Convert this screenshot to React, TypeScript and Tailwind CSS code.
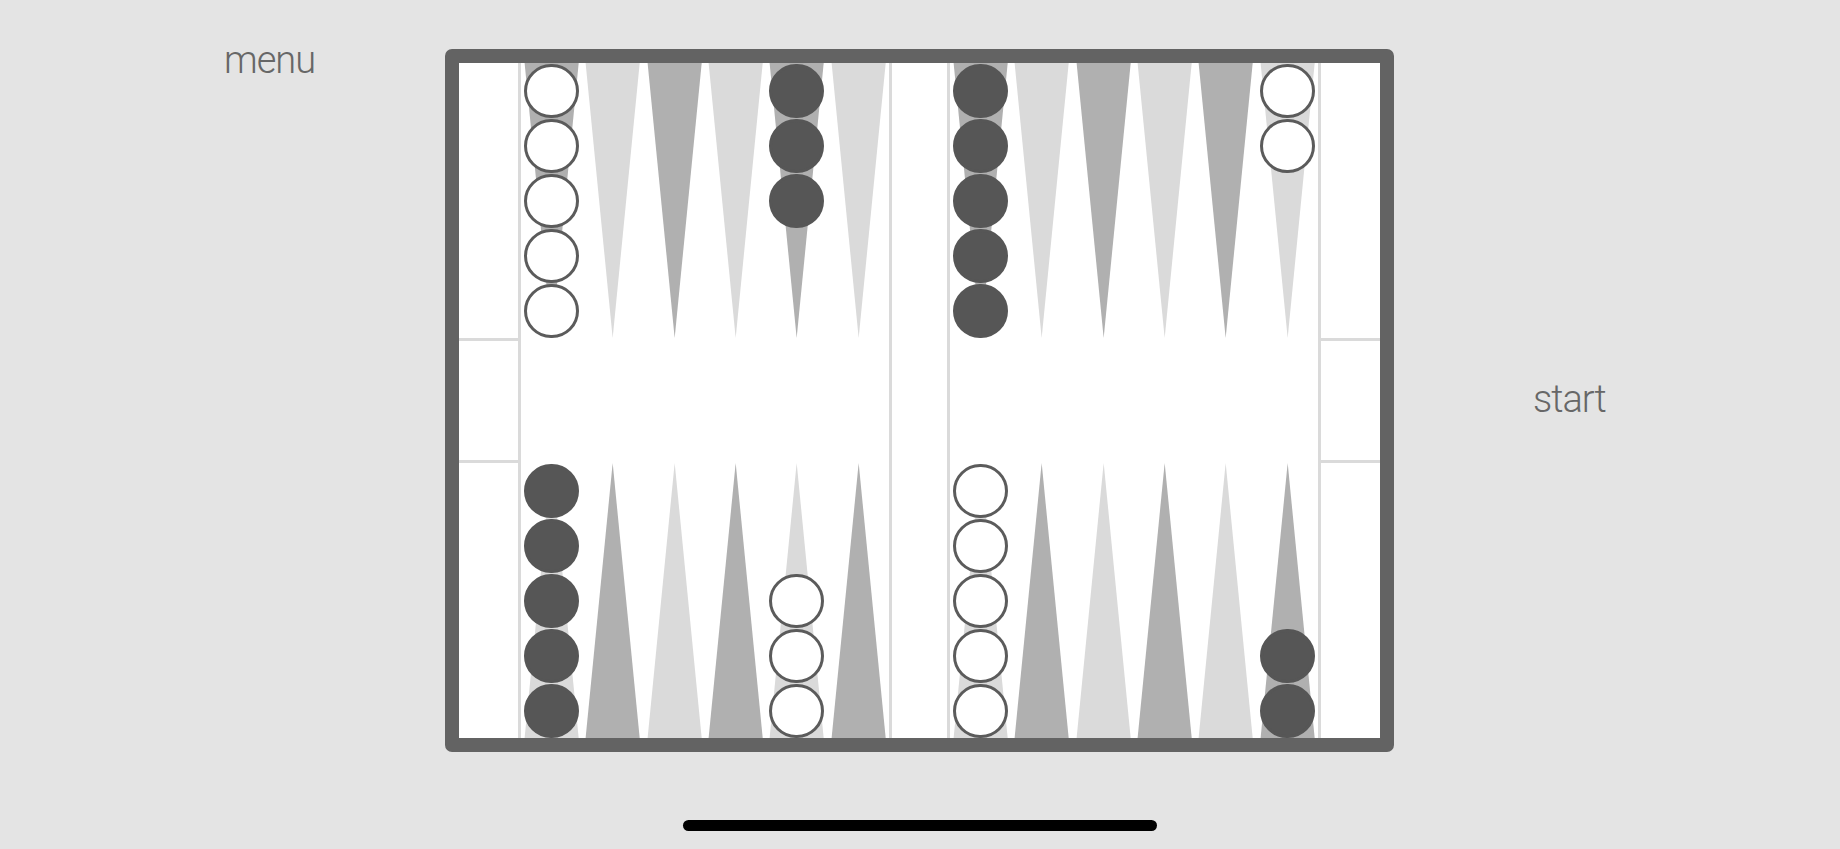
type Side = "w" | "b";
type Stack = { n: number; side: Side } | null;

// columns left to right; index 0 is the leftmost point
const TOP_ROW: Stack[] = [
  { n: 5, side: "w" },
  null,
  null,
  null,
  { n: 3, side: "b" },
  null,
  { n: 5, side: "b" },
  null,
  null,
  null,
  null,
  { n: 2, side: "w" },
];

const BOTTOM_ROW: Stack[] = [
  { n: 5, side: "b" },
  null,
  null,
  null,
  { n: 3, side: "w" },
  null,
  { n: 5, side: "w" },
  null,
  null,
  null,
  null,
  { n: 2, side: "b" },
];

function Checker({ side }: { side: Side }) {
  return (
    <div className="flex h-[55px] w-full shrink-0 items-center justify-center">
      <div
        className={
          side === "w"
            ? "h-[54px] w-[55px] rounded-full border-[3px] border-[#5b5b5b] bg-white"
            : "h-[54px] w-[55px] rounded-full border-[3px] border-[#565656] bg-[#565656]"
        }
      />
    </div>
  );
}

function Point({ top, dark, stack }: { top: boolean; dark: boolean; stack: Stack }) {
  const fill = dark ? "#b0b0b0" : "#dadada";
  const pts = top ? "3.6,0 57.7,0 30.67,275" : "3.6,275 57.7,275 30.67,0";
  const checkers = stack ? Array.from({ length: stack.n }, (_, i) => i) : [];

  return (
    <div className={`relative flex h-[275px] flex-col ${top ? "justify-start" : "justify-end"}`}>
      <svg
        className="absolute inset-0 h-full w-full"
        viewBox="0 0 61.33 275"
        preserveAspectRatio="none"
      >
        <polygon points={pts} fill={fill} />
      </svg>
      <div className="relative flex flex-col">
        {stack && checkers.map((i) => <Checker key={i} side={stack.side} />)}
      </div>
    </div>
  );
}

function Half({ offset }: { offset: number }) {
  const cols = [0, 1, 2, 3, 4, 5].map((i) => i + offset);
  return (
    <div className="flex w-[368px] flex-col justify-between">
      <div className="grid grid-cols-6">
        {cols.map((c) => (
          <Point key={c} top dark={c % 2 === 0} stack={TOP_ROW[c]} />
        ))}
      </div>
      <div className="grid grid-cols-6">
        {cols.map((c) => (
          <Point key={c} top={false} dark={c % 2 === 1} stack={BOTTOM_ROW[c]} />
        ))}
      </div>
    </div>
  );
}

function Tray() {
  return (
    <div className="flex w-[59px] flex-col">
      <div className="h-[275px]" />
      <div className="h-[3px] bg-[#dadada]" />
      <div className="flex-1" />
      <div className="h-[3px] bg-[#dadada]" />
      <div className="h-[275px]" />
    </div>
  );
}

function Board() {
  return (
    <div className="mt-[49px] rounded-[7px] border-[14px] border-[#636363] bg-white">
      <div className="flex h-[675px] w-[921px]">
        <Tray />
        <div className="w-[3px] bg-[#dadada]" />
        <Half offset={0} />
        <div className="w-[3px] bg-[#dadada]" />
        <div className="w-[55px]" />
        <div className="w-[3px] bg-[#dadada]" />
        <Half offset={6} />
        <div className="w-[3px] bg-[#dadada]" />
        <Tray />
      </div>
    </div>
  );
}

export default function App() {
  const label =
    "font-['Roboto','Liberation_Sans',sans-serif] text-[38px] font-light leading-none tracking-[-1px] text-[#676767]";

  return (
    <div className="flex h-[849px] w-full flex-col bg-[#e4e4e4]">
      <div className="flex">
        <div className="w-[445px] shrink-0 pl-[224px] pt-[41px]">
          <span className={label}>menu</span>
        </div>
        <Board />
        <div className="mt-[45px] flex items-center pl-[139px]">
          <span className={label}>start</span>
        </div>
      </div>
      <div className="mx-auto mt-[68px] h-[11px] w-[474px] rounded-full bg-black" />
    </div>
  );
}
